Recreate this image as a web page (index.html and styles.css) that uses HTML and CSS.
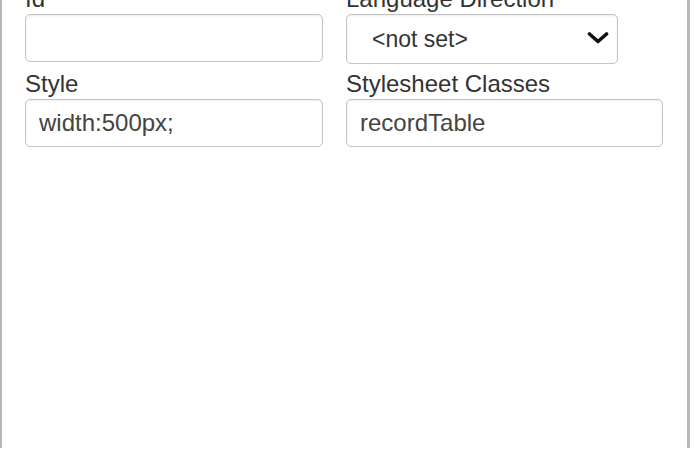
FILE: index.html
```html
<!DOCTYPE html>
<html lang="en">
<head>
<meta charset="utf-8">
<title>Table Properties</title>
<link rel="stylesheet" href="styles.css">
</head>
<body>
<div class="panel">
  <div class="form-grid">
    <div class="field">
      <label class="label" for="f-id">Id</label>
      <input class="text-input" id="f-id" type="text" value="">
    </div>
    <div class="field">
      <label class="label">Language Direction</label>
      <div class="select-box">
        <span class="select-text">&lt;not set&gt;</span>
        <svg class="chevron" width="22" height="12" viewBox="0 0 22 12"><path d="M2.5 2 L11 9.5 L19.5 2" fill="none" stroke="#111" stroke-width="3.6" stroke-linecap="round" stroke-linejoin="round"/></svg>
      </div>
    </div>
    <div class="field">
      <label class="label" for="f-style">Style</label>
      <input class="text-input" id="f-style" type="text" value="width:500px;">
    </div>
    <div class="field">
      <label class="label" for="f-class">Stylesheet Classes</label>
      <input class="text-input wide" id="f-class" type="text" value="recordTable">
    </div>
  </div>
</div>
</body>
</html>
```
FILE: styles.css
```css
html, body {
  margin: 0;
  padding: 0;
  background: #ffffff;
  height: 100%;
  overflow: hidden;
}
body {
  font-family: "Liberation Sans", Arial, sans-serif;
}
.panel {
  box-sizing: border-box;
  height: 100%;
  margin-right: 4px;
  border-left: 2px solid #b4b4b4;
  border-right: 3px solid #b8b8b8;
  padding-left: 23px;
}
.form-grid {
  display: grid;
  grid-template-columns: 298px 317px;
  column-gap: 23px;
  row-gap: 6px;
  margin-top: -15px;
  align-items: start;
}
.field {
  display: flex;
  flex-direction: column;
}
.label {
  font-size: 24px;
  line-height: 27px;
  color: #333333;
  margin-bottom: 2px;
}
.text-input {
  box-sizing: border-box;
  width: 298px;
  height: 48px;
  margin: 0;
  padding: 0 13px;
  border: 1px solid #c4c4c4;
  border-radius: 5px;
  box-shadow: inset 0 1px 2px rgba(0, 0, 0, 0.08);
  font-family: "Liberation Sans", Arial, sans-serif;
  font-size: 24px;
  color: #444444;
  background: #ffffff;
  outline: none;
}
.text-input.wide {
  width: 317px;
}
.select-box {
  box-sizing: border-box;
  width: 272px;
  height: 50px;
  border: 1px solid #c4c4c4;
  border-radius: 5px;
  box-shadow: inset 0 1px 2px rgba(0, 0, 0, 0.08);
  display: flex;
  align-items: center;
  justify-content: space-between;
  padding: 0 8px 0 25px;
  background: #ffffff;
}
.select-text {
  font-size: 23px;
  color: #333333;
}
.chevron {
  display: block;
  margin-top: -3px;
}
```
